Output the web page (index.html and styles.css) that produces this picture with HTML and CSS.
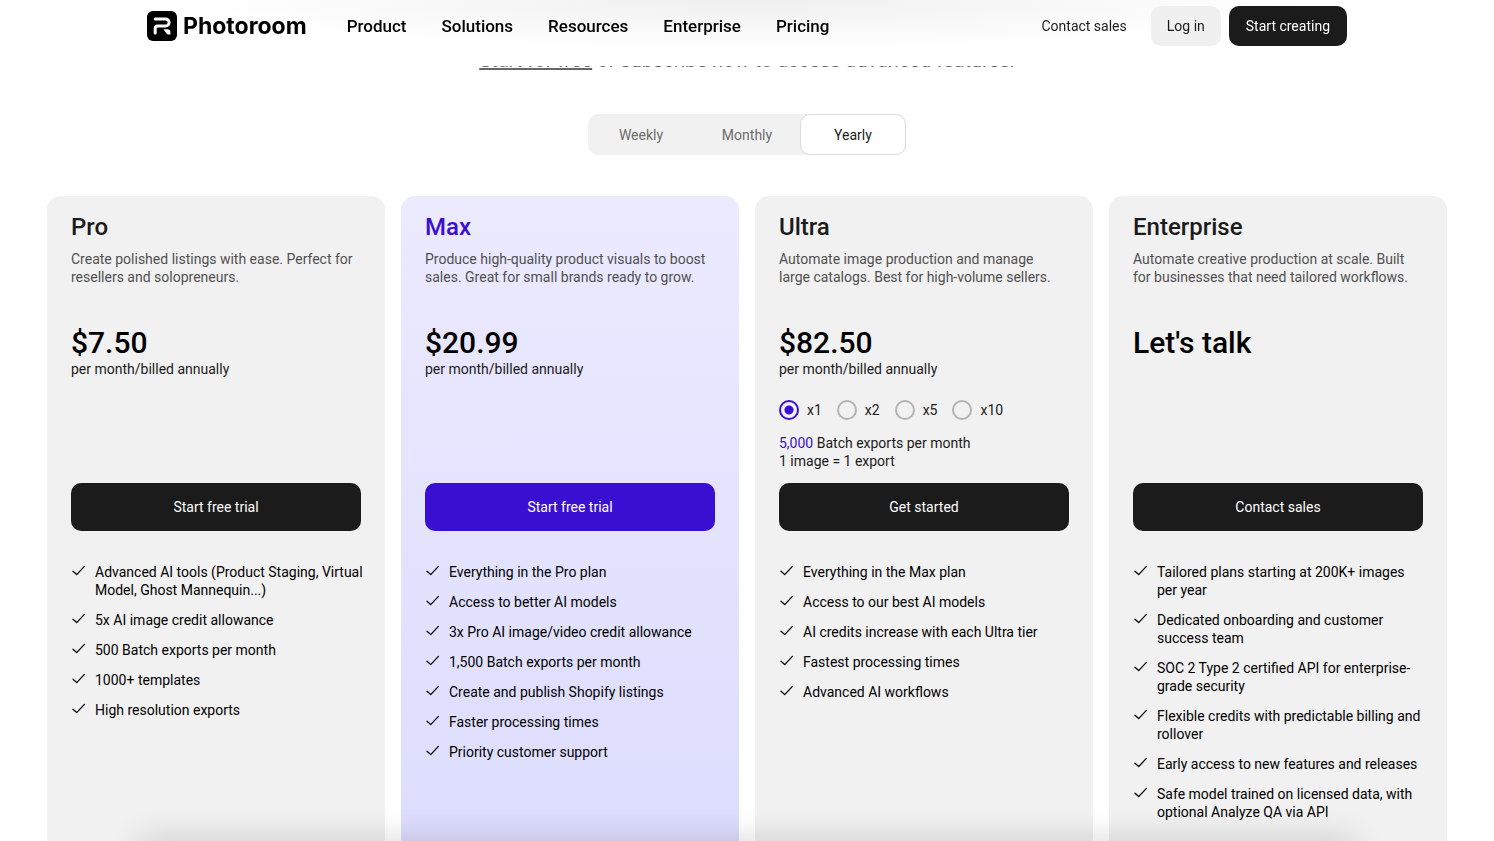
FILE: index.html
```
<!DOCTYPE html>
<html lang="en">
<head>
    <meta charset="UTF-8">
    <meta name="viewport" content="width=device-width, initial-scale=1.0">
    <title>Pricing - Photoroom</title>

    <link rel="stylesheet" href="styles.css">
</head>
<body>

    <svg class="sprite" aria-hidden="true">
        <symbol id="check" viewBox="0 0 16 16">
            <path d="M2 8.2 L5.7 11.6 L13.4 3.4" fill="none" stroke="currentColor" stroke-width="1.3" stroke-linecap="round" stroke-linejoin="round"/>
        </symbol>
    </svg>

    <header class="site-header">
        <div class="header-inner">
            <a class="logo" href="#">
                <svg class="logo-mark" viewBox="0 0 30 30" aria-hidden="true">
                    <rect width="30" height="30" rx="6" fill="#000"/>
                    <path d="M8.2 8 H18.6 A3.5 3.5 0 0 1 18.6 15 H10.6 A2.4 2.4 0 0 0 8.2 17.4 V22" fill="none" stroke="#fff" stroke-width="3" stroke-linecap="round"/>
                    <path d="M16.4 18.2 H20.4 A3 3 0 0 1 23.4 21.2 V23.4 H21.6 A2.4 2.4 0 0 1 19.6 22.4 Z" fill="#fff"/>
                </svg>
                <span class="logo-text">Photoroom</span>
            </a>

            <nav class="main-nav">
                <a href="#">Product</a>
                <a href="#">Solutions</a>
                <a href="#">Resources</a>
                <a href="#">Enterprise</a>
                <a href="#">Pricing</a>
            </nav>

            <div class="header-actions">
                <a class="contact-link" href="#">Contact sales</a>
                <button class="btn btn-light" type="button">Log in</button>
                <button class="btn btn-create" type="button">Start creating</button>
            </div>
        </div>
    </header>

    <main>
        <p class="intro"><a href="#">Start for free</a> or subscribe now to access advanced features.</p>

        <div class="billing-tabs">
            <button class="tab" type="button">Weekly</button>
            <button class="tab" type="button">Monthly</button>
            <button class="tab tab-active" type="button">Yearly</button>
        </div>

        <section class="plans">

            <article class="plan">
                <h2 class="plan-name">Pro</h2>
                <p class="plan-desc">Create polished listings with ease. Perfect for resellers and solopreneurs.</p>
                <div class="plan-pricing">
                    <p class="price">$7.50</p>
                    <p class="period">per month/billed annually</p>
                </div>
                <button class="btn btn-plan" type="button">Start free trial</button>
                <ul class="features">
                    <li><svg class="check"><use href="#check"/></svg>Advanced AI tools (Product Staging, Virtual Model, Ghost Mannequin...)</li>
                    <li><svg class="check"><use href="#check"/></svg>5x AI image credit allowance</li>
                    <li><svg class="check"><use href="#check"/></svg>500 Batch exports per month</li>
                    <li><svg class="check"><use href="#check"/></svg>1000+ templates</li>
                    <li><svg class="check"><use href="#check"/></svg>High resolution exports</li>
                </ul>
            </article>

            <article class="plan plan-max">
                <h2 class="plan-name">Max</h2>
                <p class="plan-desc">Produce high-quality product visuals to boost sales. Great for small brands ready to grow.</p>
                <div class="plan-pricing">
                    <p class="price">$20.99</p>
                    <p class="period">per month/billed annually</p>
                </div>
                <button class="btn btn-plan btn-purple" type="button">Start free trial</button>
                <ul class="features">
                    <li><svg class="check"><use href="#check"/></svg>Everything in the Pro plan</li>
                    <li><svg class="check"><use href="#check"/></svg>Access to better AI models</li>
                    <li><svg class="check"><use href="#check"/></svg>3x Pro AI image/video credit allowance</li>
                    <li><svg class="check"><use href="#check"/></svg>1,500 Batch exports per month</li>
                    <li><svg class="check"><use href="#check"/></svg>Create and publish Shopify listings</li>
                    <li><svg class="check"><use href="#check"/></svg>Faster processing times</li>
                    <li><svg class="check"><use href="#check"/></svg>Priority customer support</li>
                </ul>
            </article>

            <article class="plan">
                <h2 class="plan-name">Ultra</h2>
                <p class="plan-desc">Automate image production and manage large catalogs. Best for high-volume sellers.</p>
                <div class="plan-pricing">
                    <p class="price">$82.50</p>
                    <p class="period">per month/billed annually</p>
                    <div class="tiers">
                        <label class="tier"><input type="radio" name="tier" value="1" checked>x1</label>
                        <label class="tier"><input type="radio" name="tier" value="2">x2</label>
                        <label class="tier"><input type="radio" name="tier" value="5">x5</label>
                        <label class="tier"><input type="radio" name="tier" value="10">x10</label>
                    </div>
                    <p class="quota"><span class="quota-count">5,000</span> Batch exports per month<br>1 image = 1 export</p>
                </div>
                <button class="btn btn-plan" type="button">Get started</button>
                <ul class="features">
                    <li><svg class="check"><use href="#check"/></svg>Everything in the Max plan</li>
                    <li><svg class="check"><use href="#check"/></svg>Access to our best AI models</li>
                    <li><svg class="check"><use href="#check"/></svg>AI credits increase with each Ultra tier</li>
                    <li><svg class="check"><use href="#check"/></svg>Fastest processing times</li>
                    <li><svg class="check"><use href="#check"/></svg>Advanced AI workflows</li>
                </ul>
            </article>

            <article class="plan">
                <h2 class="plan-name">Enterprise</h2>
                <p class="plan-desc">Automate creative production at scale. Built for businesses that need tailored workflows.</p>
                <div class="plan-pricing">
                    <p class="price">Let's talk</p>
                </div>
                <button class="btn btn-plan" type="button">Contact sales</button>
                <ul class="features">
                    <li><svg class="check"><use href="#check"/></svg>Tailored plans starting at 200K+ images per year</li>
                    <li><svg class="check"><use href="#check"/></svg>Dedicated onboarding and customer success team</li>
                    <li><svg class="check"><use href="#check"/></svg>SOC 2 Type 2 certified API for enterprise-grade security</li>
                    <li><svg class="check"><use href="#check"/></svg>Flexible credits with predictable billing and rollover</li>
                    <li><svg class="check"><use href="#check"/></svg>Early access to new features and releases</li>
                    <li><svg class="check"><use href="#check"/></svg>Safe model trained on licensed data, with optional Analyze QA via API</li>
                </ul>
            </article>

        </section>
    </main>

    <div class="bottom-shade"></div>

</body>
</html>
```
FILE: styles.css
```
* {
    margin: 0;
    padding: 0;
    box-sizing: border-box;
}

html {
    scrollbar-width: none;
}

body {
    font-family: Roboto, "Liberation Sans", sans-serif;
    font-size: 14px;
    line-height: 18px;
    color: #1b1b1b;
    background-color: #fff;
}

a {
    color: inherit;
    text-decoration: none;
}

button {
    font: inherit;
    cursor: pointer;
    border: none;
}

.sprite {
    display: none;
}

/* header */
.site-header {
    position: fixed;
    top: 0;
    left: 0;
    right: 0;
    z-index: 10;
    height: 66px;
    padding: 6px 24px 0;
    background: radial-gradient(ellipse 560px 50px at 50% 0, #efefef, #fff);
}

.header-inner {
    display: flex;
    align-items: center;
    max-width: 1200px;
    height: 40px;
    margin: 0 auto;
}

.logo {
    display: flex;
    align-items: center;
    gap: 6px;
    color: #000;
}

.logo-mark {
    width: 30px;
    height: 30px;
}

.logo-text {
    font-family: Inter, Roboto, sans-serif;
    font-size: 23px;
    font-weight: 700;
}

.main-nav {
    display: flex;
    gap: 35px;
    margin-left: 40px;
    font-size: 17px;
    font-weight: 500;
    color: #000;
}

.header-actions {
    display: flex;
    align-items: center;
    gap: 8px;
    margin-left: auto;
}

.contact-link {
    margin-right: 16px;
}

/* buttons */
.btn {
    height: 40px;
    padding: 0 16px;
    color: #fff;
    background-color: #1b1b1b;
    border-radius: 10px;
}

.btn-light {
    color: #1b1b1b;
    background-color: #f0f0f0;
}

.btn-create {
    padding: 0 17px;
}

.btn-plan {
    width: 100%;
    height: 48px;
}

.btn-purple {
    background-color: #3b0fd1;
}

/* intro line slides under the header */
.intro {
    padding-top: 48px;
    font-size: 20px;
    line-height: 24px;
    text-align: center;
    color: #666;
}

.intro a {
    text-decoration: underline;
    text-decoration-thickness: 2px;
}

.billing-tabs {
    display: flex;
    width: fit-content;
    margin: 42px auto 0;
    background-color: #f1f1f1;
    border-radius: 10px;
}

.tab {
    min-width: 106px;
    height: 41px;
    color: #6b6b6b;
    background: none;
    border: 1px solid transparent;
    border-radius: 10px;
}

.tab-active {
    color: #1b1b1b;
    background-color: #fff;
    border-color: #dcdcdc;
}

/* plans */
.plans {
    display: grid;
    grid-template-columns: repeat(4, 1fr);
    gap: 16px;
    max-width: 1400px;
    margin: 41px auto 0;
}

.plan {
    padding: 17px 24px 48px;
    background-color: #f1f1f1;
    border-radius: 14px;
}

.plan-max {
    background: linear-gradient(#ebeaff, #dcdcfd);
}

.plan-name {
    font-size: 24px;
    font-weight: 500;
    line-height: 28px;
}

.plan-max .plan-name {
    color: #3b0fd1;
}

.plan-desc {
    margin-top: 9px;
    padding-right: 4px;
    color: #505050;
}

.plan-pricing {
    height: 158px;
    margin-top: 39px;
}

.price {
    font-size: 30px;
    font-weight: 500;
    line-height: 35px;
    color: #000;
}

.tiers {
    display: flex;
    gap: 15px;
    margin-top: 22px;
}

.tier {
    display: flex;
    align-items: center;
    gap: 8px;
}

.tier input {
    appearance: none;
    width: 20px;
    height: 20px;
    border: 2px solid #b3b3b3;
    border-radius: 50%;
}

.tier input:checked {
    border-color: #3b0fd1;
    background: radial-gradient(#3b0fd1 4px, transparent 5px);
}

.quota {
    margin-top: 14px;
}

.quota-count {
    color: #3b0fd1;
}

.features {
    display: grid;
    gap: 12px;
    margin: 32px -3px 0 0;
    list-style: none;
    color: #000;
}

.features li {
    display: flex;
    gap: 8px;
}

.check {
    flex: none;
    width: 16px;
    height: 16px;
}

/* soft shadow along the bottom edge of the window */
.bottom-shade {
    position: fixed;
    left: 140px;
    right: 140px;
    bottom: -20px;
    height: 20px;
    box-shadow: 0 0 32px rgba(0, 0, 0, 0.2);
}
```
